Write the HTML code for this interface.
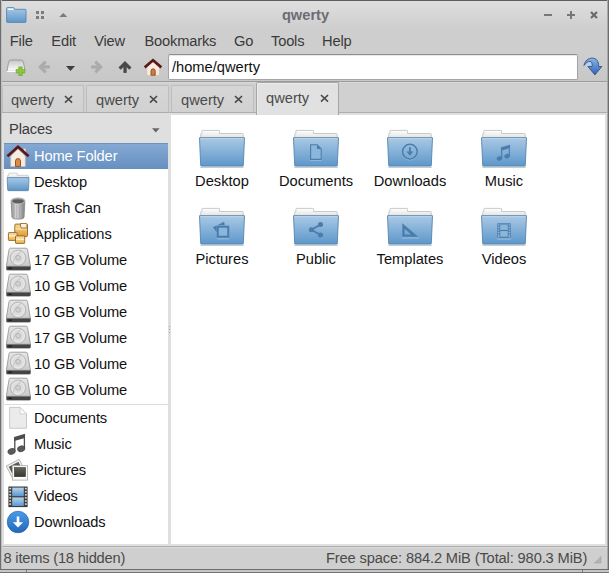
<!DOCTYPE html>
<html>
<head>
<meta charset="utf-8">
<title>qwerty</title>
<style>
*{box-sizing:border-box;margin:0;padding:0}
html,body{width:609px;height:573px;overflow:hidden;background:#d4d4d4}
body{font-family:"Liberation Sans",sans-serif;font-size:14.67px;color:#3a3a3a;position:relative}
.abs{position:absolute}
#win{position:absolute;left:0;top:0;width:609px;height:573px;background:#cecece;overflow:hidden}
#frameT{left:0;top:0;width:609px;height:1px;background:#5c5c5c}
#frameL{left:0;top:0;width:2px;height:573px;background:linear-gradient(90deg,#6e6e6e 0,#6e6e6e 1px,#bebebe 1px,#bebebe 2px)}
#frameR{left:607px;top:0;width:2px;height:573px;background:linear-gradient(90deg,#a8a8a8 0,#a8a8a8 1px,#6e6e6e 1px,#6e6e6e 2px)}
#frameB{left:0;top:569px;width:609px;height:4px;background:linear-gradient(#6c6c6c 0,#6c6c6c 1px,#c6c6c6 1px,#c6c6c6 3px,#747474 3px,#747474 4px)}
#titlebar{left:1px;top:1px;width:607px;height:28px;background:linear-gradient(#dedede 0,#dcdcdc 15%,#cecece 100%)}
#title{left:0;top:6px;width:611px;text-align:center;font-size:14.67px;font-weight:bold;color:#6c6c72;line-height:18px}
#menubar{left:1px;top:29px;width:607px;height:24px;background:#cecece}
.mi{position:absolute;top:32px;line-height:18px;font-size:14.67px;color:#3a3a3a;white-space:nowrap;letter-spacing:-.17px}
#toolbar{left:1px;top:53px;width:607px;height:29px;background:linear-gradient(#cecece,#c7c7c7)}
#tbline{left:1px;top:81px;width:607px;height:1px;background:#9c9c9c}
#addr{left:168px;top:54px;width:410px;height:26px;background:#fff;border:1px solid #a4a4a4;border-top-color:#8e8e8e;border-radius:2px;box-shadow:inset 0 1px 1px rgba(0,0,0,.10)}
#addrtxt{left:172px;top:58px;line-height:18px;font-size:14.67px;color:#111;white-space:nowrap}
#tabbar{left:2px;top:82px;width:605px;height:31px;background:linear-gradient(#d9d9d9 0,#d9d9d9 1px,#d0d0d0 1px,#d0d0d0 100%)}
#tabline{left:2px;top:112px;width:605px;height:1px;background:#adadad}
.tab{position:absolute;top:85px;height:28px;background:linear-gradient(#d6d6d6,#d1d1d1);border:1px solid #bebebe;border-bottom:none;border-radius:2px 2px 0 0}
.tab.act{top:82px;height:31px;background:#e1e1e1;border-color:#a6a6a6;box-shadow:inset 1px 1px 0 #ececec}
.tabt{position:absolute;line-height:18px;font-size:14.67px;color:#4a4a4a;white-space:nowrap}
#under{left:2px;top:113px;width:605px;height:433px;background:#dfdfdf}
#side{left:4px;top:143px;width:164px;height:401px;background:#fff}
#sidehead{left:9px;top:120px;line-height:18px;font-size:14.67px;color:#3a3a3a;letter-spacing:-.15px}
.row{position:absolute;left:4px;width:164px;height:26px}
.row.sel{background:linear-gradient(#84a8d2,#6690c1);border-top:1px solid #6f92bc}
.rt{position:absolute;left:34px;line-height:18px;font-size:14.67px;color:#111;white-space:nowrap;letter-spacing:-.12px}
.rt.w{color:#fff}
.ric{position:absolute;left:6px;width:24px;height:24px}
.ric.hdi{left:6px;width:25px;height:24px}
#main{left:171px;top:115px;width:434px;height:429px;background:#fff}
.lbl{position:absolute;width:94px;text-align:center;line-height:18px;font-size:14.67px;color:#111;white-space:nowrap}
.tx{width:9px;height:9px}
.fic{position:absolute;width:48px;height:48px}
#status{left:1px;top:547px;width:607px;height:22px;background:linear-gradient(#dadada 0,#dadada 1px,#cfcfcf 1px,#cfcfcf 100%)}
#stline{left:1px;top:546px;width:607px;height:1px;background:#aeaeae}
.st{position:absolute;top:549px;line-height:18px;font-size:14.67px;color:#4a4a4a;white-space:nowrap;letter-spacing:-.13px}
</style>
</head>
<body>
<div id="win">
<svg width="0" height="0" style="position:absolute">
<defs>
<linearGradient id="fb" x1="0" y1="0" x2="0" y2="1"><stop offset="0" stop-color="#aac9e5"/><stop offset="1" stop-color="#5d97ca"/></linearGradient>
<linearGradient id="fp" x1="0" y1="0" x2="0" y2="1"><stop offset="0" stop-color="#ffffff"/><stop offset="1" stop-color="#e2e2e2"/></linearGradient>
<linearGradient id="gmetal" x1="0" y1="0" x2="1" y2="0"><stop offset="0" stop-color="#8e8e8e"/><stop offset=".35" stop-color="#d6d6d6"/><stop offset=".6" stop-color="#bdbdbd"/><stop offset="1" stop-color="#7f7f7f"/></linearGradient>
<linearGradient id="ghd" x1="0" y1="0" x2="0" y2="1"><stop offset="0" stop-color="#e6e6e6"/><stop offset="1" stop-color="#c4c4c4"/></linearGradient>
<linearGradient id="gdl" x1="0" y1="0" x2="0" y2="1"><stop offset="0" stop-color="#4a9cea"/><stop offset="1" stop-color="#2467b8"/></linearGradient>
<linearGradient id="gfilm" x1="0" y1="0" x2="0" y2="1"><stop offset="0" stop-color="#b5d3ec"/><stop offset="1" stop-color="#5b98cf"/></linearGradient>
<linearGradient id="gbox" x1="0" y1="0" x2="0" y2="1"><stop offset="0" stop-color="#f8d897"/><stop offset="1" stop-color="#dd9a38"/></linearGradient>
<linearGradient id="gbox2" x1="0" y1="0" x2="0" y2="1"><stop offset="0" stop-color="#fadfa6"/><stop offset="1" stop-color="#ecb458"/></linearGradient>
<linearGradient id="ggo" x1="0" y1="0" x2="0" y2="1"><stop offset="0" stop-color="#8ab4e8"/><stop offset="1" stop-color="#2f62b5"/></linearGradient>
<linearGradient id="gtab" x1="0" y1="0" x2="0" y2="1"><stop offset="0" stop-color="#c6c6c6"/><stop offset="1" stop-color="#ffffff"/></linearGradient>
<linearGradient id="gpho" x1="0" y1="0" x2="0" y2="1"><stop offset="0" stop-color="#62655a"/><stop offset="1" stop-color="#36372f"/></linearGradient>

<symbol id="arr" viewBox="0 0 14 14" overflow="visible"><path d="M1.630 8.670 7 3.300l5.370 5.370" fill="none" stroke="currentColor" stroke-width="3.200" stroke-linejoin="miter"/><path d="M7.050 4v8.900" stroke="currentColor" stroke-width="3.300" fill="none"/></symbol>
<symbol id="tx" viewBox="0 0 9 9"><path d="M1 1l7 6.600M8 1 1 7.600" stroke="#4a4a4a" stroke-width="1.650" fill="none"/></symbol>
<symbol id="folder" viewBox="0 0 48 48">
<path d="M2.7 14V10.2q0-.7.7-.7h.5V7.1q0-.7.7-.7h16.3q.7 0 .7.700V9.5h22.900q.7 0 .7.700V14z" fill="url(#fp)" stroke="#bdbdbd" stroke-width=".8"/>
<path d="M2.2 43.300h43.600" stroke="#1d3d5c" stroke-width="1.2" opacity=".25"/>
<path d="M1.500 13.700h45l-1.200 27.800q0 .6-.7.600H3.400q-.7 0-.7-.600z" fill="url(#fb)" stroke="#5584ae" stroke-width=".9"/>
<path d="M2.200 14.600h43.600" stroke="#d3e4f3" stroke-width=".8" opacity=".75"/>
</symbol>

<symbol id="folder-s" viewBox="0 0 24 24">
<path d="M1.700 7V4.300h1V2.700q0-.5.500-.5h7.600q.5 0 .5.500V4.300h10.500q.5 0 .5.500V7z" fill="url(#fp)" stroke="#bdbdbd" stroke-width=".7"/>
<path d="M1.200 6.600h21.800l-.5 12.300q0 .5-.5.500H2.200q-.5 0-.5-.5z" fill="url(#fb)" stroke="#5584ae" stroke-width=".8"/>
<path d="M2 20h20.300" stroke="#1d3d5c" stroke-width=".8" opacity=".2"/>
</symbol>

<symbol id="home" viewBox="0 0 24 24">
<rect x="17.600" y="4.500" width="2.200" height="5" fill="#f2e6da" stroke="#b9a691" stroke-width=".5"/>
<path d="M4.700 12.200 12 5l7.300 7.200v10.300H4.700z" fill="#f6ece1" stroke="#cdbba5" stroke-width=".6"/>
<path d="M9.500 22.400v-5.400q0-2.400 2.500-2.400t2.500 2.400v5.400z" fill="#dc8a42" stroke="#8c4a18" stroke-width=".9"/>
<path d="M2.300 11.400 12 2.700l9.700 8.700" fill="none" stroke="#5c1718" stroke-width="2.600" stroke-linecap="square" stroke-linejoin="miter"/>
</symbol>

<symbol id="trash" viewBox="0 0 24 24">
<path d="M5.100 3.800 5.900 20.200q.1 2 6.100 2t6.100-2L18.900 3.800z" fill="url(#gmetal)" stroke="#777" stroke-width=".6"/>
<path d="M8 7.500v14M10.600 7.800v14.200M13.400 7.800v14.200M16 7.500v14" stroke="#8a8a8a" stroke-width=".6" opacity=".6"/>
<ellipse cx="12" cy="3.800" rx="6.900" ry="2.800" fill="#8a8a8a" stroke="#b5b5b5" stroke-width="1"/>
<ellipse cx="12" cy="4.300" rx="5.600" ry="1.900" fill="#5e5e5e"/>
</symbol>

<symbol id="apps" viewBox="0 0 24 24">
<rect x="8.800" y="3.100" width="12.700" height="12.500" rx="1" fill="url(#gbox)" stroke="#93641a" stroke-width=".9"/>
<path d="M9.400 7.300h5M9.400 8.300h11.500" stroke="#fbe6b8" stroke-width=".9" opacity=".8"/>
<path d="M14.500 2.500h5.800q.6 0 .6.600v3.300q0 .6-.6.600h-3.800q-2 0-2-2z" fill="#f9f1df" stroke="#93641a" stroke-width=".8"/>
<rect x="2.400" y="11.600" width="8.800" height="7.800" rx=".6" fill="url(#gbox2)" stroke="#93641a" stroke-width=".9"/>
<path d="M3 14.900h7.600" stroke="#fdf0cf" stroke-width="1.300"/>
<rect x="9.500" y="14.900" width="9.200" height="7.500" rx=".6" fill="url(#gbox2)" stroke="#93641a" stroke-width=".9"/>
<path d="M10.100 18.300h8" stroke="#fdf0cf" stroke-width="1.300"/>
</symbol>

<symbol id="hd" viewBox="0 0 25 24">
<path d="M4.600 1.200h15.400q1.300 0 1.500 1.200l2.900 16.800v3q0 1-1 1H1.300q-1 0-1-1v-3L3.100 2.400q.2-1.200 1.500-1.200z" fill="url(#ghd)" stroke="#8e8e8e" stroke-width=".8"/>
<path d="M.5 19.500h24v2.600q0 .8-.8.800H1.300q-.8 0-.8-.8z" fill="#444"/>
<path d="M.5 19.400h24" stroke="#6e6e6e" stroke-width=".8"/>
<rect x="2.400" y="20.500" width="3.400" height="1.300" fill="#1a1a1a"/>
<circle cx="12.100" cy="10.800" r="7.700" fill="#dcdcdc" stroke="#adadad" stroke-width=".8"/>
<circle cx="12.100" cy="10.800" r="6.100" fill="none" stroke="#ededed" stroke-width=".9"/>
<circle cx="12.100" cy="10.800" r="2.400" fill="#d2d2d2" stroke="#a6a6a6" stroke-width=".7"/>
<path d="M6.800 15.800Q9 8 15.500 4.300" stroke="#b9b9b9" stroke-width=".7" fill="none"/>
</symbol>

<symbol id="doc" viewBox="0 0 24 24">
<path d="M3.600 1.400h10.400l6.500 6.500v14.400H3.600z" fill="#ebebeb" stroke="#bcbcbc" stroke-width=".8"/>
<path d="M14 1.400v6.500h6.500z" fill="#fbfbfb" stroke="#c6c6c6" stroke-width=".7" stroke-linejoin="round"/>
</symbol>

<symbol id="music" viewBox="0 0 24 24">
<path d="M8.200 4.900 19 1.700v4.200L8.200 9.100z" fill="#4e4e4e"/>
<path d="M8.800 5v14M18.400 2.500v14" stroke="#4e4e4e" stroke-width="1.300"/>
<ellipse cx="5.600" cy="19.400" rx="3.800" ry="2.900" fill="#5a5a5a" stroke="#3f3f3f" stroke-width=".6" transform="rotate(-18 5.600 19.400)"/>
<ellipse cx="15.200" cy="16.800" rx="3.800" ry="2.900" fill="#5a5a5a" stroke="#3f3f3f" stroke-width=".6" transform="rotate(-18 15.200 16.800)"/>
</symbol>

<symbol id="pics" viewBox="0 0 24 24">
<g transform="rotate(-27 9.500 10)">
<rect x="2.200" y="4" width="14.500" height="13" fill="#f4f4f4" stroke="#9d9d9d" stroke-width=".7"/>
<rect x="4" y="5.800" width="10.900" height="8.500" fill="url(#gpho)"/>
</g>
<rect x="6.300" y="7.700" width="15.300" height="14.400" fill="#fbfbfb" stroke="#a9a9a9" stroke-width=".8"/>
<rect x="8.300" y="9.500" width="11.300" height="9.200" fill="url(#gpho)" stroke="#2b2c25" stroke-width=".5"/>
</symbol>

<symbol id="video" viewBox="0 0 24 24">
<rect x="2.400" y="1.500" width="19.200" height="20.600" fill="#3c3c3c"/>
<rect x="6.200" y="2.600" width="11.600" height="8.600" fill="url(#gfilm)"/>
<rect x="6.200" y="12.400" width="11.600" height="8.600" fill="url(#gfilm)"/>
<g fill="#d9d9d9">
<rect x="3.300" y="2.800" width="1.800" height="1.600"/><rect x="3.300" y="5.900" width="1.800" height="1.600"/><rect x="3.300" y="9" width="1.800" height="1.600"/><rect x="3.300" y="12.100" width="1.800" height="1.600"/><rect x="3.300" y="15.200" width="1.800" height="1.600"/><rect x="3.300" y="18.300" width="1.800" height="1.600"/>
<rect x="18.900" y="2.800" width="1.800" height="1.600"/><rect x="18.900" y="5.900" width="1.800" height="1.600"/><rect x="18.900" y="9" width="1.800" height="1.600"/><rect x="18.900" y="12.100" width="1.800" height="1.600"/><rect x="18.900" y="15.200" width="1.800" height="1.600"/><rect x="18.900" y="18.300" width="1.800" height="1.600"/>
</g>
</symbol>

<symbol id="dl" viewBox="0 0 24 24">
<circle cx="12" cy="12" r="10.800" fill="url(#gdl)" stroke="#1f5aa6" stroke-width=".6"/>
<path d="M10.700 6.600h2.600v5.700h3.800L12 17.500 6.900 12.300h3.800z" fill="#fff"/>
</symbol>
</defs>
</svg>

<div class="abs" id="titlebar"></div>
<div class="abs" id="title">qwerty</div>
<div class="abs" id="menubar"></div>
<span class="mi" style="left:9.800px">File</span>
<span class="mi" style="left:51.300px">Edit</span>
<span class="mi" style="left:94.200px">View</span>
<span class="mi" style="left:144.500px">Bookmarks</span>
<span class="mi" style="left:234px">Go</span>
<span class="mi" style="left:271px">Tools</span>
<span class="mi" style="left:322px">Help</span>

<div class="abs" id="toolbar"></div>
<div class="abs" id="tbline"></div>
<div class="abs" id="addr"></div>
<div class="abs" id="addrtxt">/home/qwerty</div>


<!-- titlebar icons -->
<svg class="abs" style="left:6px;top:7px;width:21px;height:16px" viewBox="0 0 21 16">
<path d="M.6 14.600V1.400q0-.8.800-.8h6q.5 0 .8.500l.7 1.200h10.300q.8 0 .8.800v11.500q0 .8-.8.800H1.400q-.8 0-.8-.8z" fill="url(#fb)" stroke="#5886b3" stroke-width=".9"/>
<path d="M1.700 1.500h5.700v1.400H1.700z" fill="#fff"/>
</svg>
<div class="abs" style="left:36px;top:11px;width:3px;height:3px;background:#7b7b7b"></div>
<div class="abs" style="left:41px;top:11px;width:3px;height:3px;background:#7b7b7b"></div>
<div class="abs" style="left:36px;top:16px;width:3px;height:3px;background:#7b7b7b"></div>
<div class="abs" style="left:41px;top:16px;width:3px;height:3px;background:#7b7b7b"></div>
<svg class="abs" style="left:58.500px;top:13.300px;width:8.500px;height:4.200px" viewBox="0 0 10 5"><path d="M0 5 5 0l5 5z" fill="#7b7b7b"/></svg>
<!-- window buttons -->
<div class="abs" style="left:544px;top:14px;width:8px;height:2px;background:#777"></div>
<div class="abs" style="left:567px;top:14px;width:8px;height:2px;background:#777"></div>
<div class="abs" style="left:570px;top:11px;width:2px;height:8px;background:#777"></div>
<svg class="abs" style="left:590px;top:11px;width:8px;height:8px" viewBox="0 0 8 8"><path d="M1 1l6 6M7 1 1 7" stroke="#6a6a6a" stroke-width="2.200" fill="none"/></svg>

<!-- toolbar icons -->
<svg class="abs" style="left:5px;top:58px;width:22px;height:20px" viewBox="0 0 22 20">
<path d="M2 13.300 3.500 4.300q.4-2.300 2.600-2.300h9.800q2.200 0 2.600 2.300L20 13.300z" fill="url(#gtab)" stroke="#8d8d8d" stroke-width=".8"/>
<path d="M1.800 13.500h18.400" stroke="#fdfdfd" stroke-width="1.100"/>
<path d="M13.800 8.900h3.400v2.600h2.600v3.400h-2.600v2.600h-3.400v-2.600h-2.600v-3.400h2.600z" fill="#8cc63e" stroke="#73a82c" stroke-width=".8" stroke-linejoin="round"/>
</svg>
<svg class="abs" style="left:37px;top:59.700px;width:14px;height:14px;color:#ababab"><use href="#arr" transform="rotate(-90 7 7)"/></svg>
<svg class="abs" style="left:66px;top:66px;width:9px;height:5px" viewBox="0 0 9 5"><path d="M0 0h9L4.500 5z" fill="#3d3d3d"/></svg>
<svg class="abs" style="left:90.300px;top:59.700px;width:14px;height:14px;color:#ababab"><use href="#arr" transform="rotate(90 7 7)"/></svg>
<svg class="abs" style="left:118px;top:60px;width:14px;height:14px;color:#484848"><use href="#arr"/></svg>
<svg class="abs" style="left:143px;top:56px;width:20px;height:20px" viewBox="0 0 20 20">
<path d="M3.900 10.600 10 5l6.300 5.600v8.700H3.900z" fill="#f6ece1" stroke="#d3c2ae" stroke-width=".6"/>
<path d="M8 19.200v-4.200q0-2.200 2.100-2.200t2.100 2.200v4.200z" fill="#cf7f3a" stroke="#8c4a18" stroke-width=".9"/>
<path d="M2.700 10.500 10 4.200l7.300 6.300" fill="none" stroke="#5c1718" stroke-width="2.700" stroke-linecap="square" stroke-linejoin="miter"/>
</svg>
<svg class="abs" style="left:582px;top:56.400px;width:22px;height:20px" viewBox="0 0 22 20">
<path d="M2.300 9.300C4 6.500 6.300 5.400 8 5.400c1.900 0 2.500 2 2.400 5.100H6.500z" fill="#b5d0f1" opacity=".75"/>
<path d="M2 9.500C3 4.500 6.500 2.100 10.100 2.100c4.400 0 6.600 2.900 6.600 8.400h3.200L12.900 18.900 5.900 10.500h4.300C10.300 7.400 9.700 5.300 8 5.300 6 5.300 3.500 7 2 9.500z" fill="url(#ggo)" stroke="#274a7e" stroke-width=".8" stroke-linejoin="round"/>
</svg>

<div class="abs" id="tabbar"></div>
<div class="abs" id="under"></div>
<div class="tab" style="left:2px;width:82px"></div>
<div class="tab" style="left:86px;width:83px"></div>
<div class="tab" style="left:171px;width:83px"></div>
<div class="abs" id="tabline"></div>
<div class="tab act" style="left:256px;width:83px;height:33px"></div>
<span class="tabt" style="left:11px;top:91px">qwerty</span>
<span class="tabt" style="left:96px;top:91px">qwerty</span>
<span class="tabt" style="left:181px;top:91px">qwerty</span>
<span class="tabt" style="left:266px;top:89px">qwerty</span>


<svg class="abs tx" style="left:64px;top:95.200px"><use href="#tx"/></svg>
<svg class="abs tx" style="left:149px;top:95.200px"><use href="#tx"/></svg>
<svg class="abs tx" style="left:234px;top:95.200px"><use href="#tx"/></svg>
<svg class="abs tx" style="left:319.500px;top:94px"><use href="#tx"/></svg>
<svg class="abs" style="left:152px;top:128.300px;width:7.600px;height:4.600px" viewBox="0 0 9 5"><path d="M0 0h9L4.500 5z" fill="#666"/></svg>
<div class="abs" style="left:169px;top:326px;width:1px;height:1px;background:#a5a5a5"></div>
<div class="abs" style="left:169px;top:329px;width:1px;height:1px;background:#a5a5a5"></div>
<div class="abs" style="left:169px;top:332px;width:1px;height:1px;background:#a5a5a5"></div>

<div class="abs" id="sidehead">Places</div>
<div class="abs" id="side"></div>
<div class="row sel" style="top:143px"></div>
<span class="rt w" style="top:147px">Home Folder</span>
<span class="rt" style="top:173px">Desktop</span>
<span class="rt" style="top:199px">Trash Can</span>
<span class="rt" style="top:225px">Applications</span>
<span class="rt" style="top:251px">17 GB Volume</span>
<span class="rt" style="top:277px">10 GB Volume</span>
<span class="rt" style="top:303px">10 GB Volume</span>
<span class="rt" style="top:329px">17 GB Volume</span>
<span class="rt" style="top:355px">10 GB Volume</span>
<span class="rt" style="top:381px">10 GB Volume</span>
<span class="rt" style="top:409px">Documents</span>
<span class="rt" style="top:435px">Music</span>
<span class="rt" style="top:461px">Pictures</span>
<span class="rt" style="top:487px">Videos</span>
<span class="rt" style="top:513px">Downloads</span>


<svg class="ric" style="top:144px"><use href="#home"/></svg>
<svg class="ric" style="top:171px"><use href="#folder-s"/></svg>
<svg class="ric" style="top:196.500px"><use href="#trash"/></svg>
<svg class="ric" style="top:221px"><use href="#apps"/></svg>
<svg class="ric hdi" style="top:247px"><use href="#hd"/></svg>
<svg class="ric hdi" style="top:273px"><use href="#hd"/></svg>
<svg class="ric hdi" style="top:299px"><use href="#hd"/></svg>
<svg class="ric hdi" style="top:325px"><use href="#hd"/></svg>
<svg class="ric hdi" style="top:351px"><use href="#hd"/></svg>
<svg class="ric hdi" style="top:377px"><use href="#hd"/></svg>
<div class="abs" style="left:4px;top:404px;width:164px;height:1px;background:#dcdcdc"></div>
<svg class="ric" style="top:406px"><use href="#doc"/></svg>
<svg class="ric" style="top:432px"><use href="#music"/></svg>
<svg class="ric" style="top:458px"><use href="#pics"/></svg>
<svg class="ric" style="top:485px"><use href="#video"/></svg>
<svg class="ric" style="top:510px"><use href="#dl"/></svg>

<div class="abs" id="main"></div>
<svg class="fic" style="left:198px;top:124px"><use href="#folder"/></svg>
<svg class="fic" style="left:292px;top:124px"><use href="#folder"/></svg>
<svg class="fic" style="left:386px;top:124px"><use href="#folder"/></svg>
<svg class="fic" style="left:480px;top:124px"><use href="#folder"/></svg>
<svg class="fic" style="left:198px;top:202px"><use href="#folder"/></svg>
<svg class="fic" style="left:292px;top:202px"><use href="#folder"/></svg>
<svg class="fic" style="left:386px;top:202px"><use href="#folder"/></svg>
<svg class="fic" style="left:480px;top:202px"><use href="#folder"/></svg>
<svg class="fic" style="left:292px;top:124px" viewBox="0 0 48 48"><g transform="translate(0 .9)" opacity=".6"><path d="M18.600 20.700h6.400l4.200 4.200v10.500h-10.600z" fill="none" stroke="#b4d2ec" stroke-width="1"/></g><path d="M18.600 20.700h6.400l4.200 4.200v10.500h-10.600z" fill="#8ab6dc" stroke="#4b7dac" stroke-width="1.100" stroke-linejoin="round"/><path d="M25 20.700v4.200h4.200z" fill="#4b7dac"/></svg>
<svg class="fic" style="left:386px;top:124px" viewBox="0 0 48 48"><circle cx="23.900" cy="28.500" r="7.300" fill="none" stroke="#b4d2ec" stroke-width="1.200" opacity=".5"/><circle cx="23.900" cy="27.600" r="7.300" fill="#8ab6dc" fill-opacity=".35" stroke="#4b7dac" stroke-width="1.500"/><path d="M23.900 23.300v6.200" stroke="#4b7dac" stroke-width="1.800"/><path d="M20.400 27.600h7L23.900 31.800z" fill="#4b7dac"/></svg>
<svg class="fic" style="left:480px;top:124px" viewBox="0 0 48 48"><g fill="#4b7dac" stroke="#4b7dac"><path d="M21.200 23.400 29.800 21v3l-8.600 2.400z" stroke-width=".3"/><path d="M21.700 23.600v10.400M29.300 21.300v10.300" stroke-width="1.100" fill="none"/><ellipse cx="19.500" cy="34.500" rx="2.700" ry="2.100" transform="rotate(-18 19.500 34.500)" stroke-width=".2"/><ellipse cx="27.100" cy="32.200" rx="2.700" ry="2.100" transform="rotate(-18 27.100 32.200)" stroke-width=".2"/></g></svg>
<svg class="fic" style="left:198px;top:202px" viewBox="0 0 48 48"><path d="M20.400 22.900 26 20.100l.4 2.800zM15.200 25.300l3.200-1.500v5.800z" fill="#4b7dac" stroke="#4b7dac" stroke-width=".5" stroke-linejoin="round"/><path d="M19 36.800h12" stroke="#b4d2ec" stroke-width="1" opacity=".6"/><rect x="19.800" y="24.700" width="10.400" height="10" fill="#8ab6dc" stroke="#4b7dac" stroke-width="2"/></svg>
<svg class="fic" style="left:292px;top:202px" viewBox="0 0 48 48"><g stroke="#4b7dac" fill="#4b7dac"><path d="M28.500 22.600 19.300 27.700l9.200 5.300" fill="none" stroke-width="1.800"/><circle cx="19.300" cy="27.700" r="2.500" stroke="none"/><circle cx="28.500" cy="22.600" r="2.500" stroke="none"/><circle cx="28.500" cy="33" r="2.500" stroke="none"/></g></svg>
<svg class="fic" style="left:386px;top:202px" viewBox="0 0 48 48"><path d="M16 36h17" stroke="#b4d2ec" stroke-width="1" opacity=".6"/><path d="M16.300 21.200v13.600h15.900zM18.700 27v5.400h6.300z" fill="#4b7dac" fill-rule="evenodd"/></svg>
<svg class="fic" style="left:480px;top:202px" viewBox="0 0 48 48"><path d="M17 37h14" stroke="#b4d2ec" stroke-width="1" opacity=".6"/><rect x="17.300" y="21.300" width="13.400" height="14.600" fill="#4b7dac"/><rect x="20.200" y="22.500" width="7.600" height="5.400" fill="#8ab6dc"/><rect x="20.200" y="29.100" width="7.600" height="5.600" fill="#8ab6dc"/><g fill="#a8cbe8"><rect x="18.1" y="22.4" width="1.200" height="1.200"/><rect x="18.1" y="24.9" width="1.200" height="1.200"/><rect x="18.1" y="27.4" width="1.200" height="1.200"/><rect x="18.1" y="29.9" width="1.200" height="1.200"/><rect x="18.1" y="32.4" width="1.200" height="1.200"/><rect x="18.1" y="34.1" width="1.200" height="1.200"/><rect x="28.7" y="22.4" width="1.200" height="1.200"/><rect x="28.7" y="24.9" width="1.200" height="1.200"/><rect x="28.7" y="27.4" width="1.200" height="1.200"/><rect x="28.7" y="29.9" width="1.200" height="1.200"/><rect x="28.7" y="32.4" width="1.200" height="1.200"/><rect x="28.7" y="34.1" width="1.200" height="1.200"/></g></svg>
<span class="lbl" style="left:175px;top:172px">Desktop</span>
<span class="lbl" style="left:269px;top:172px">Documents</span>
<span class="lbl" style="left:363px;top:172px">Downloads</span>
<span class="lbl" style="left:457px;top:172px">Music</span>
<span class="lbl" style="left:175px;top:250px">Pictures</span>
<span class="lbl" style="left:269px;top:250px">Public</span>
<span class="lbl" style="left:363px;top:250px">Templates</span>
<span class="lbl" style="left:457px;top:250px">Videos</span>

<div class="abs" id="stline"></div>
<div class="abs" id="status"></div>
<span class="st" style="left:3.500px;letter-spacing:-.2px">8 items (18 hidden)</span>
<span class="st" style="left:326px">Free space: 884.2 MiB (Total: 980.3 MiB)</span>

<svg class="abs" style="left:594px;top:556px;width:8px;height:8px" viewBox="0 0 8 8"><path d="M7 .5v6.500H.5z" fill="#b4b4b4" stroke="#a2a2a2" stroke-width=".6"/></svg>
<div class="abs" id="frameT"></div>
<div class="abs" id="frameL"></div>
<div class="abs" id="frameR"></div>
<div class="abs" id="frameB"></div>
<div class="abs" style="left:26px;top:570px;width:1px;height:2px;background:#7c7c7c"></div>
<div class="abs" style="left:582px;top:570px;width:1px;height:2px;background:#7c7c7c"></div>
</div>
</body>
</html>
